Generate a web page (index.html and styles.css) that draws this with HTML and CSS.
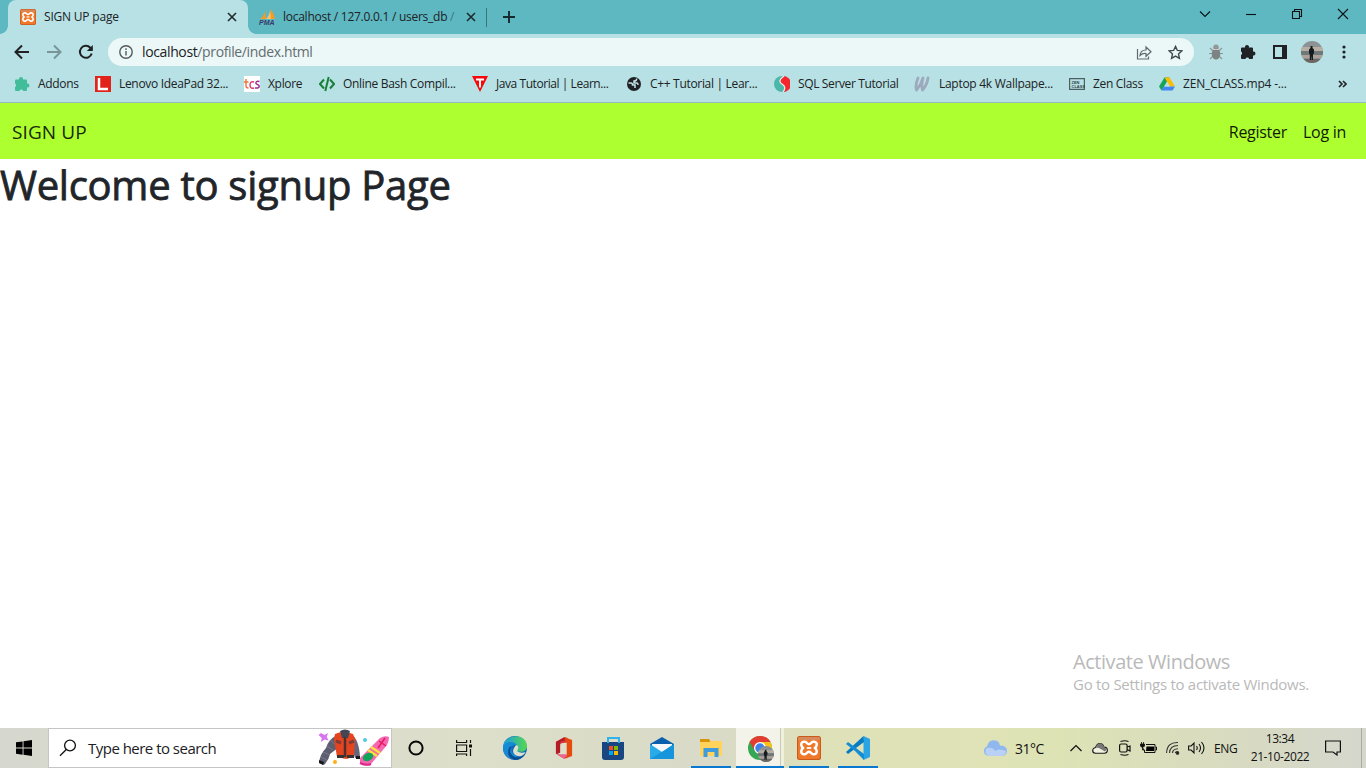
FILE: index.html
```html
<!DOCTYPE html>
<html lang="en">
<head>
<meta charset="utf-8">
<title>SIGN UP page</title>
<link rel="stylesheet" href="styles.css">
</head>
<body>
<svg class="defs" width="0" height="0">
  <defs>
    <symbol id="xampp" viewBox="0 0 24 24"><rect width="24" height="24" rx="2.5" fill="#c85a1c"/><rect x="1" y="1" width="22" height="22" rx="2" fill="#f0782a"/><path d="M1 3a2 2 0 0 1 2-2h18a2 2 0 0 1 2 2v1H1z" fill="#d98a5a"/><path d="M8 5.800C5.500 5.300 4 7 4.300 9Q4.600 11 6.200 12Q4.600 13 4.300 15C4 17 5.500 18.700 8 18.200C10 17.700 10.200 15.800 12 15.800C13.800 15.800 14 17.700 16 18.200C18.500 18.700 20 17 19.700 15Q19.400 13 17.800 12Q19.400 11 19.700 9C20 7 18.500 5.300 16 5.800C14 6.300 13.800 8.200 12 8.200C10.200 8.200 10 6.300 8 5.800z" fill="none" stroke="#fff" stroke-width="2.500" stroke-linejoin="round"/><path d="M9.800 12h4.400" stroke="#fff" stroke-width="1.800"/></symbol>
    <symbol id="puzzle" viewBox="0 0 16 16"><path d="M1 4.500q0-1 1-1h3.100a2 2 0 1 1 3.800 0H12q1 0 1 1v3a2 2 0 1 1 0 3.900V14q0 1-1 1H9.200a2 2 0 0 0-3.800 0H2q-1 0-1-1v-3a2 2 0 0 0 0-3.600z"/></symbol>
    <symbol id="portrait" viewBox="0 0 22 22"><clipPath id="round"><circle cx="11" cy="11" r="11"/></clipPath><g clip-path="url(#round)"><path fill="#8d9295" d="M0 0h22v22H0z"/><path fill="#b7afa3" d="M0 6h22v4H0z"/><path fill="#6f7779" d="M0 10h22v4H0z"/><path fill="#aaa199" d="M0 14h22v3H0z"/><path fill="#6c6762" d="M0 18h22v4H0z"/><path d="M9.500 5h2v2L13 8.500v4l-1 .5v6h-1.200l-.3-4-.4 4H8.800v-6L8 12.500v-4L9.500 7z" fill="#16191d"/></g></symbol>
  </defs>
</svg>
<div class="screen">
  <header class="tabstrip">
    <div class="tab tab-active">
      <svg width="16" height="16"><use href="#xampp"/></svg>
      <span class="tab-title title-one">SIGN UP page</span>
      <svg class="close" width="10" height="10" viewBox="0 0 10 10"><path d="M1 1l8 8M9 1L1 9"/></svg>
    </div>
    <div class="tab tab-second">
      <svg width="18" height="18" viewBox="0 0 18 18"><path d="M1 11Q5 8 6 3l1 8zM8 11Q12 6 12 1q3 5 4 10z" fill="#f59a23"/><path d="M7 11q4-4 4-9l1 9z" fill="#ffc06a"/><text x="0" y="16.500" class="pma">PMA</text></svg>
      <span class="tab-title title-two">localhost / 127.0.0.1 / users_db <i>/</i></span>
      <svg class="close" width="10" height="10" viewBox="0 0 10 10"><path d="M1 1l8 8M9 1L1 9"/></svg>
    </div>
    <svg class="newtab" width="12" height="12" viewBox="0 0 12 12"><path d="M6 0v12M0 6h12" stroke="#16292c" stroke-width="1.900"/></svg>
    <div class="window-controls">
      <svg width="12" height="12" viewBox="0 0 12 12"><path d="M1 3.500l5 5 5-5"/></svg>
      <svg width="12" height="12" viewBox="0 0 12 12"><path d="M1 6.500h10"/></svg>
      <svg width="12" height="12" viewBox="0 0 12 12"><path d="M1.500 3.500h7v7h-7zM3.500 3V1.500h7v7H9"/></svg>
      <svg width="12" height="12" viewBox="0 0 12 12"><path d="M1 1l10 10M11 1L1 11"/></svg>
    </div>
  </header>

  <div class="toolbar">
    <div class="nav-buttons">
      <svg width="16" height="16" viewBox="0 0 16 16"><path d="M15 8H2M8 1.500L1.500 8 8 14.500"/></svg>
      <svg class="muted" width="16" height="16" viewBox="0 0 16 16"><path d="M1 8h13M8 1.500L14.500 8 8 14.500"/></svg>
      <svg width="16" height="16" viewBox="0 0 16 16"><path d="M13.700 9.500A6 6 0 1 1 12.300 3.700L14 5.500"/><path d="M14.800 1v6H8.800z" fill="#202124" stroke="none"/></svg>
    </div>
    <div class="omnibox">
      <svg width="14" height="14" viewBox="0 0 14 14" fill="none" stroke="#54595c" stroke-width="1.400"><circle cx="7" cy="7" r="6.200"/><path d="M7 6v4.500M7 3.300v1.600"/></svg>
      <span class="url"><b>localhost</b>/profile/index.html</span>
      <svg class="share" width="16" height="15" viewBox="0 0 16 15" fill="none" stroke="#5f6a70" stroke-width="1.200"><path d="M1.500 4v10h11v-2.500M4 10.500Q4.500 5 10 5V2l5 4.700-5 4.600V8.500Q6.500 8 4 10.500z"/></svg>
      <svg width="15" height="15" viewBox="0 0 16 16" fill="none" stroke="#40494e" stroke-width="1.500"><path d="M8 1.500l2 4.300 4.700.5-3.500 3.200 1 4.700L8 11.800l-4.200 2.400 1-4.700L1.300 6.300l4.700-.5z"/></svg>
    </div>
    <div class="extensions">
      <svg width="16" height="16" viewBox="0 0 16 16"><g stroke="#8d9495" stroke-width="1.200" fill="none"><path d="M2 4l3 3h6l3-3M1 9.500h14M2 15l3-3h6l3 3"/></g><circle cx="8" cy="3.300" r="2.800" fill="#939999"/><ellipse cx="8" cy="10" rx="4.300" ry="5.500" fill="#7d8383"/><path d="M5 5.500h6" stroke="#c3c9c9"/></svg>
      <svg width="16" height="16" fill="#202124"><use href="#puzzle"/></svg>
      <svg width="14" height="14" viewBox="0 0 14 14"><path fill="#202124" fill-rule="evenodd" d="M0 0h14v14H0zM2 2v10h7V2z"/></svg>
      <svg width="22" height="22"><use href="#portrait"/></svg>
      <svg width="4" height="14" viewBox="0 0 4 14" fill="#202124"><circle cx="2" cy="2" r="1.600"/><circle cx="2" cy="7" r="1.600"/><circle cx="2" cy="12" r="1.600"/></svg>
    </div>
  </div>

  <nav class="bookmarks">
    <a><svg width="16" height="16" fill="#42bd9a"><use href="#puzzle"/></svg><span>Addons</span></a>
    <a><svg width="16" height="16" viewBox="0 0 16 16"><path fill="#e2231a" d="M0 0h16v16H0z"/><path d="M4 2v11h9" fill="none" stroke="#fff" stroke-width="2.500"/></svg><span>Lenovo IdeaPad 32...</span></a>
    <a><svg width="16" height="16" viewBox="0 0 16 16"><path fill="#fff" d="M0 0h16v16H0z"/><g fill="none" stroke-width="1.400"><path d="M2 3v7q0 2 2.500 2M0 6h4.500" stroke="#ef7136"/><path d="M10 6Q6 5 6 9t4 3" stroke="#d83770"/><path d="M15.500 5.500q-4-1-3.500 2l3 2q1 3-4 2.500" stroke="#9b2a8d"/></g></svg><span>Xplore</span></a>
    <a><svg width="16" height="16" viewBox="0 0 16 16" fill="none" stroke="#188038" stroke-width="2"><path d="M5 3.500L1 8l4 4.500M11 3.500L15 8l-4 4.500M9.700 1L6.300 15"/></svg><span>Online Bash Compil...</span></a>
    <a><svg width="16" height="16" viewBox="0 0 16 16"><path fill="#f40a0a" d="M0 0h16L8 16z"/><path d="M4 3.500h8M8 3.500v8" stroke="#fff" stroke-width="1.900"/></svg><span class="java">Java Tutorial | Learn...</span></a>
    <a><svg width="16" height="16" viewBox="0 0 16 16"><circle cx="8" cy="8" r="7" fill="#202124"/><path d="M2.500 7H5q1.500 0 1.500 2H9v3M10.500 2.500Q11 5 8 5v2h3q1 0 1 2" fill="none" stroke="#c5e4e7" stroke-width="1.500"/></svg><span>C++ Tutorial | Lear...</span></a>
    <a><svg width="16" height="16" viewBox="0 0 16 16"><circle cx="8" cy="8" r="8" fill="#4bb7a9"/><path d="M9 0a8 8 0 0 1 0 16q4-4 0-7-6-4 0-9z" fill="#f5272d"/><path d="M10 0Q3 5 8 8t1 8" fill="none" stroke="#e2eeec" stroke-width="1.300"/></svg><span class="sql">SQL Server Tutorial</span></a>
    <a><svg width="16" height="16" viewBox="0 0 16 16" fill="none" stroke="#9da9bc" stroke-width="2.800" stroke-linecap="round" stroke-linejoin="round"><path d="M4 2Q1 9 2.500 14 7 9 9 2 7 9 8.500 14q4.500-5 5.500-12"/></svg><span class="laptop">Laptop 4k Wallpape...</span></a>
    <a><svg width="16" height="16" viewBox="0 0 16 16"><path d="M.6 2.600h14.800v10.800H.6z" fill="none" stroke="#4c5f61" stroke-width="1.200"/><text x="2.500" y="7.500" class="zen">ZEN</text><text x="2.500" y="11.500" class="zen">CLASS</text></svg><span>Zen Class</span></a>
    <a><svg width="16" height="16" viewBox="0 0 16 16"><path d="M5.500 1.500h5L5 11l-2.500 3.500L0 10.500z" fill="#16a45a"/><path d="M5.500 1.500h5l5.500 9h-5z" fill="#fbbc04"/><path d="M5 10.500h11l-2.500 4h-11z" fill="#4285f4"/><path d="M8 5.800l2.800 4.700H5.200z" fill="#b7e1e4"/></svg><span class="video">ZEN_CLASS.mp4 -...</span></a>
    <svg class="more" width="9" height="8" viewBox="0 0 9 8" fill="none" stroke="#202124" stroke-width="1.600"><path d="M1 1l3 3-3 3M5 1l3 3-3 3"/></svg>
  </nav>

  <nav class="site-nav">
    <a class="brand">SIGN UP</a>
    <div class="links"><a>Register</a><a>Log in</a></div>
  </nav>
  <main class="content">
    <h1>Welcome to signup Page</h1>
    <div class="activate"><p class="activate-title">Activate Windows</p><p class="activate-note">Go to Settings to activate Windows.</p></div>
  </main>

  <footer class="taskbar">
    <div class="cell start"><svg width="16" height="16" viewBox="0 0 16 16"><path d="M0 2.300L6.600 1.400v6.200H0zM7.500 1.200L16 0v7.600H7.500zM0 8.500h6.600v6.200L0 13.800zM7.500 8.500H16V16l-8.500-1.200z"/></svg></div>
    <div class="search">
      <svg width="18" height="18" viewBox="0 0 18 18" fill="none" stroke="#111" stroke-width="1.300"><circle cx="11" cy="6.500" r="5.400"/><path d="M7.300 10.500L1 16.800"/></svg>
      <span>Type here to search</span>
      <svg class="doodle" width="74" height="38" viewBox="0 0 74 38">
        <path d="M4 4l3.500 2L11 4l-1.300 4 2 3.500-4-1L4 13l.7-4L1.500 6z" fill="#d774ee"/>
        <path d="M20 6Q11 11 9 19 3 25 2 34l5 2q5-5 6-11l9-7z" fill="#5d5e70"/><path d="M13 11l6 5M10 17l6 4M6 23l7 3M4 28l6 3" stroke="#77788b" stroke-width="1"/><path d="M2 31l5 2-1 3-4-2z" fill="#18191c"/>
        <path d="M34 5q8 5 9 23l-5 1-5-18z" fill="#65667c"/><path d="M39 27h4v3h-4z" fill="#18191c"/>
        <path d="M18 5q8-4 18 0l2 5-1 18-8 2-9-2-3-18z" fill="#e5441e"/><path d="M23 2q5-3 10 0l-2 7h-6z" fill="#444655"/><path d="M28 8v20" stroke="#4e3030" stroke-width="2.500"/><path d="M19 12l5 2M37 12l-5 2" stroke="#843a35" stroke-width="3"/><path d="M20 26h7v3h-7zM30 26h7v3h-7z" fill="#333"/>
        <circle cx="48" cy="11" r="2" fill="#4dcbe2"/><circle cx="18" cy="33" r="2" fill="#ffad15"/>
        <path d="M43 29L63 9q5-3 9-1 0 4-2 8L54 35q-6 3-11-1z" fill="#f568b1"/><path d="M54 18l9 6M51 21l9 6" stroke="#f9e338" stroke-width="2.500"/><path d="M62 12l7 5M68 9l-7 10" stroke="#e51b61" stroke-width="1.500"/><ellipse cx="51" cy="28" rx="5.500" ry="3.800" transform="rotate(-25 51 28)" fill="#10a45b"/><path d="M43 34q6 3 11 1" stroke="#da278c" stroke-width="2" fill="none"/>
      </svg>
    </div>
    <div class="cell"><svg width="16" height="16" viewBox="0 0 16 16"><circle cx="8" cy="8" r="6.600" fill="none" stroke="#080808" stroke-width="2"/></svg></div>
    <div class="cell"><svg width="16" height="16" viewBox="0 0 16 16" fill="none" stroke="#111" stroke-width="1.200"><path d="M.6 0v2.500h10V0M.6 5h10v6.500H.6zM.6 16v-2h10v2M14.500 0v3M14.500 9v7"/><path d="M13 4.500h3v3h-3z" fill="#111" stroke="none"/></svg></div>
    <div class="apps">
      <div class="cell"><svg width="24" height="24" viewBox="0 0 24 24"><defs><linearGradient id="e1" x2="1"><stop stop-color="#199ce2"/><stop offset="1" stop-color="#58d84d"/></linearGradient></defs><circle cx="12" cy="12" r="12" fill="#0f67b8"/><path d="M0 11C1-2 23-4 24 10c0 5-5 7-10 5-2-1 1-2 0-5-2-5-12-3-14 2z" fill="url(#e1)"/><path d="M0 12C2 4 11 5 14 9 7 7 6 17 14 20 9 26 0 21 0 12z" fill="#158bd4"/><path d="M13 9q4 1 1 6 4 3 8.500 1-2 5-8 4-8-3-1.500-11z" fill="#dcdfcc"/><path d="M9 10q-4 6 1 10 6 4 12-2-4 6-10 6-7-2-7-8 0-5 4-6z" fill="#0c4c93"/></svg></div>
      <div class="cell"><svg width="18" height="22" viewBox="0 0 20 24"><path d="M1 5l9-5 4 1v4L6 7v10l-4 2-1-1z" fill="#b51b24"/><path d="M11 0l8 3v18l-8 3z" fill="#e64a0c"/><path d="M6 5l7-2v19l-3 2-8-5 11 1V5L6 7z" fill="#dd3440"/><path d="M6 8l7-2v14H6z" fill="#dedfcb"/><path d="M2 19h11v2l-3 3z" fill="#eb668c"/></svg></div>
      <div class="cell"><svg width="24" height="24" viewBox="0 0 24 24"><path d="M1 6h22v15q0 3-3 3H4q-3 0-3-3z" fill="#194580"/><path d="M7 7V2h11v5" fill="none" stroke="#2eb3ed" stroke-width="2"/><path d="M8 10h4v4H8z" fill="#f25022"/><path d="M13 10h4v4h-4z" fill="#7fba00"/><path d="M8 15h4v4H8z" fill="#00a4ef"/><path d="M13 15h4v4h-4z" fill="#ffb900"/></svg></div>
      <div class="cell"><svg width="24" height="22" viewBox="0 0 24 22"><path d="M0 7L12 0l12 7v15H0z" fill="#0a5fae"/><path d="M2 7h20v9H2z" fill="#f5f9fb"/><path d="M0 7l12 8 12-8v15H0z" fill="#29abe7"/><path d="M0 22L15 13l9-6v15z" fill="#1694dc"/></svg></div>
      <div class="cell running"><svg width="22" height="20" viewBox="0 0 22 20"><path d="M0 1h9l2 3H0z" fill="#d99507"/><path d="M0 4h9l2-1h11v15H0z" fill="#ffd35c"/><path d="M3.500 19v-9h15v9h-4v-5h-7v5z" fill="#3f9bdb"/></svg></div>
      <div class="cell running current"><svg width="26" height="26" viewBox="0 0 26 26"><circle cx="12" cy="12" r="12" fill="#34a853"/><path d="M1.600 6A12 12 0 0 1 22.400 6H12l-5 9z" fill="#e43c31"/><path d="M22.400 6A12 12 0 0 1 12 24l5-9-5-9z" fill="#fbc116"/><circle cx="12" cy="12" r="6" fill="#fff"/><circle cx="12" cy="12" r="4.700" fill="#3f81ed"/><use href="#portrait" x="10" y="10" width="16" height="16"/></svg></div>
      <div class="cell running"><svg width="24" height="24"><use href="#xampp"/></svg></div>
      <div class="cell running"><svg width="24" height="24" viewBox="0 0 24 24"><path d="M17.500 0L24 3v18l-6.500 3z" fill="#2ba4e5"/><path d="M17.500 0L0 16l2 2 16-12z" fill="#087bc1"/><path d="M0 8l2-2 16 12v6L9 15z" fill="#148dd3"/></svg></div>
    </div>
    <div class="tray">
      <svg width="24" height="16" viewBox="0 0 24 16"><path d="M5 16a5 5 0 0 1-1-9.500Q6-1 12 .500q4 0 5 5 7 0 7 5.500 0 5-6 5z" fill="#91b8ee"/><path d="M5 16a5 5 0 0 1-1-8q6-1 8 3 4-3 11 0 0 5-5 5z" fill="#b9d1f4"/></svg>
      <span class="temp">31°C</span>
      <svg width="12" height="8" viewBox="0 0 12 8" fill="none" stroke="#111" stroke-width="1.200"><path d="M.5 7L6 1.500 11.500 7"/></svg>
      <svg width="16" height="11" viewBox="0 0 16 11"><path d="M3.500 10.300Q.5 10 .7 7 1 5 3.500 4.500 5 .500 8 .600q3 0 4 3.500 3.500.3 3.400 3.200-.2 3-3 3z" fill="#f0f1df" stroke="#181818" stroke-width="1.100"/><path d="M3.500 4.500Q5 .5 8 .600q3 0 4 3.500l3 2-2 2.500L7 5z" fill="#777"/></svg>
      <svg width="12" height="16" viewBox="0 0 12 16" fill="none" stroke="#111" stroke-width="1.200"><rect x=".6" y="4" width="7.500" height="8" rx="1.500"/><path d="M8 7l3-1v5L8 9.500M1.500 1.500q4.500-1.500 8 0M1.500 14.500q4.500 1.500 8 0"/></svg>
      <svg width="17" height="12" viewBox="0 0 17 12"><path d="M6 2.500h9v8H4.500V8M15.500 5h1v3h-1" fill="none" stroke="#111"/><path d="M6.500 4.500H14V9H6z"/><path d="M1.500 0v2M3.500 0v2M.5 2h4v2L3 5.500H2L.5 4zM2.500 5v3h2" fill="#111" stroke="#111" stroke-width=".8"/></svg>
      <svg width="14" height="14" viewBox="0 0 14 14" fill="none" stroke="#333" stroke-width="1.100"><path d="M.6 12Q1 1 12 1.500M3.500 12Q4 4.500 12 4.500M6.500 12Q6.500 8 12 7.700M9.300 12q0-1.500 3-1.500"/><circle cx="11.500" cy="12" r="1.300" fill="#111"/></svg>
      <svg width="17" height="14" viewBox="0 0 17 14" fill="none" stroke="#111" stroke-width="1.100"><path d="M.6 5h2.500L6 2v10L3.100 9H.6zM8.500 5q1.500 2 0 4M11 3q3 4 0 8M13.500 1q5 6 0 12"/></svg>
      <span class="language">ENG</span>
      <div class="clock"><span>13:34</span><span>21-10-2022</span></div>
      <svg width="16" height="16" viewBox="0 0 16 16" fill="none" stroke="#111" stroke-width="1.200"><path d="M.6 1h14.800v11H12v3l-4-3H.6z"/></svg>
      <div class="show-desktop"></div>
    </div>
  </footer>
</div>
</body>
</html>
```
FILE: styles.css
```css
* { box-sizing: border-box; }
body, h1, p { margin: 0; }
body { overflow: hidden; font-family: "Open Sans", "Noto Sans", sans-serif; color: #202124; }
svg { display: block; flex-shrink: 0; }
.defs { position: absolute; }
.screen { width: 1366px; height: 768px; display: flex; flex-direction: column; background: #fff; }

.tabstrip { height: 34px; display: flex; padding-left: 8px; background: #5db8c1; }
.tab { height: 34px; display: flex; align-items: center; font-size: 12px; white-space: nowrap; }
.tab-active { position: relative; width: 240px; padding: 0 11px 0 12px; gap: 8px; background: #b7e1e4; border-radius: 8px 8px 0 0; }
.tab-active::before, .tab-active::after { content: ""; position: absolute; bottom: 0; width: 8px; height: 8px; }
.tab-active::before { left: -8px; background: radial-gradient(circle at 0 0, #5db8c1 7.5px, #b7e1e4 8px); }
.tab-active::after { right: -8px; background: radial-gradient(circle at 100% 0, #5db8c1 7.5px, #b7e1e4 8px); }
.tab-second { width: 239px; padding: 0 11px; gap: 6px; background: linear-gradient(#39747a, #39747a) right 8px / 1px 19px no-repeat; }
.tab-title { flex: 1; padding-bottom: 1px; }
.tab-title i { font-style: normal; opacity: .45; }
.title-one { letter-spacing: -.2px; }
.title-two { letter-spacing: -.26px; }
.close { fill: none; stroke: #20292c; stroke-width: 1.6; }
.pma { font: italic bold 7px "Liberation Sans", sans-serif; fill: #39386b; }
.newtab { margin: 11px 0 0 16px; }
.window-controls { display: flex; gap: 34px; margin: 8px 17px 0 auto; fill: none; stroke: #0c1213; stroke-width: 1.1; }

.toolbar { height: 35px; display: flex; align-items: center; background: #b7e1e4; padding: 0 19px 0 14px; }
.nav-buttons { display: flex; gap: 16px; fill: none; stroke: #202124; stroke-width: 2; }
.nav-buttons .muted { stroke: #78969a; }
.omnibox { width: 1086px; height: 28px; margin-left: 14px; margin-top: 1px; border-radius: 14px; background: #ecf8f8; padding: 0 11px; display: flex; align-items: center; }
.url { font-size: 14px; letter-spacing: -.37px; color: #646b6e; margin-left: 9px; padding-bottom: 1px; }
.url b { font-weight: 400; color: #202124; }
.share { margin: 0 16px 0 auto; }
.extensions { display: flex; align-items: center; gap: 16px; margin-left: 14px; }
.extensions svg:nth-child(3) { margin-left: 1px; }
.extensions svg:nth-child(4) { margin-left: -2px; }
.extensions svg:last-child { margin-left: 3px; }

.bookmarks { height: 34px; display: grid; grid-template-columns: 81px 149px 75px 153px 154px 148px 140px 155px 90px 1fr auto; align-items: center; padding: 0 19px 3px 14px; background: #b7e1e4; border-bottom: 1px solid #98b7c6; font-size: 12px; white-space: nowrap; }
.bookmarks a { display: flex; align-items: center; gap: 8px; }
.bookmarks span { letter-spacing: -.32px; padding-bottom: 1px; }
.bookmarks .java { letter-spacing: -.44px; }
.bookmarks .sql { letter-spacing: -.37px; }
.bookmarks .laptop { letter-spacing: -.28px; padding-left: 1px; }
.bookmarks .video { letter-spacing: -.2px; }
.zen { font: bold 4px "Liberation Sans", sans-serif; fill: #304244; }

.site-nav { height: 56px; background: #adff2f; padding: 0 20px 0 12px; display: flex; align-items: center; justify-content: space-between; color: #111b05; }
.brand { font-size: 19px; font-weight: 400; letter-spacing: .1px; color: #1a2907; padding-top: 1px; }
.links { display: flex; gap: 16px; font-size: 16px; letter-spacing: -.28px; padding-top: 1px; }
.content { flex: 1; display: flex; flex-direction: column; justify-content: space-between; }
h1 { font-size: 40px; font-weight: 400; line-height: 48px; letter-spacing: -.27px; color: #212529; -webkit-text-stroke: .8px #212529; padding-top: 2px; white-space: nowrap; }
.activate { padding: 0 0 34px 1073px; color: #b9b9b9; white-space: nowrap; }
.activate-title { font-size: 20px; line-height: 24px; letter-spacing: -.45px; }
.activate-note { font-size: 15px; line-height: 20px; letter-spacing: -.28px; }

.taskbar { height: 40px; display: flex; background: linear-gradient(90deg, #d6d8cf, #dddfca 35%, #d9dac7 52%, #dfe1b8 61%, #dee3b5 77%, #d8dbc0 90%, #d5d7cd); }
.cell { width: 48px; height: 40px; display: grid; place-items: center; }
.search { width: 344px; background: #fff; border: 1px solid #c4c6c6; display: flex; align-items: center; padding-left: 10px; font-size: 15px; }
.search span { margin-left: 11px; letter-spacing: -.52px; }
.doodle { margin-left: auto; }
.apps { display: flex; margin-left: 2px; }
.apps .cell { width: 49px; }
.running { background: linear-gradient(#0878d1, #0878d1) center bottom / 40px 2px no-repeat; }
.apps .current { background: linear-gradient(#0878d1, #0878d1) 1px bottom / 48px 2px no-repeat, linear-gradient(90deg, transparent 1px, #f3f3ea 1px 45px, #c9cbb0 45px 46px, #f0f0df 46px); }
.current svg { margin: 2px 0 0 2px; }
.tray { margin-left: auto; display: grid; grid-template-columns: 32px 55px 22px 27px 21px 26px 22px 26px 32px 79px 36px 5px; align-items: center; color: #111; white-space: nowrap; }
.temp { font-size: 14px; letter-spacing: -.5px; }
.language { font-size: 12px; letter-spacing: -.3px; }
.clock { display: grid; justify-items: center; width: 68px; font-size: 12px; line-height: 18px; letter-spacing: -.4px; }
.show-desktop { height: 40px; border-left: 1px solid #a9ac9d; }
```
